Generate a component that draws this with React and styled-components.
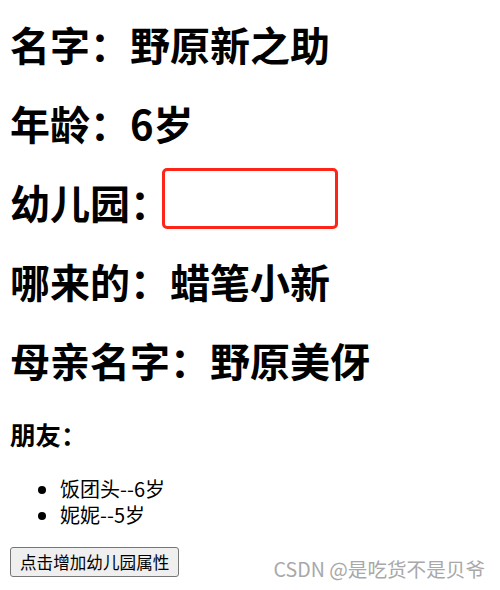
import React from "react";
import styled, { createGlobalStyle } from "styled-components";

const GlobalStyle = createGlobalStyle`
  html, body {
    margin: 0;
    padding: 0;
    background: #fff;
  }
  body {
    font-family: "Noto Sans CJK SC", "Liberation Sans", sans-serif;
    color: #000;
  }
`;

const Page = styled.div`
  position: relative;
  width: 500px;
  height: 590px;
  padding: 1px 10px 0;
  box-sizing: border-box;
  overflow: hidden;
`;

const Title = styled.h1`
  font-size: 40px;
  font-weight: 700;
  line-height: 52px;
  height: 52px;
  margin: 0 0 27px;
  display: flex;
  align-items: center;

  &:first-child {
    margin-top: 16.5px;
  }
`;

const Field = styled.span`
  display: inline-block;
  flex: none;
  width: 170px;
  height: 55px;
  border: 3px solid #ff2418;
  border-radius: 5px;
  margin: -7.5px 0 -1.5px -8px;
`;

const SubTitle = styled.h3`
  font-size: 25.5px;
  font-weight: 700;
  line-height: 30px;
  margin: 33px 0 27.5px;
`;

const List = styled.ul`
  margin: 0 0 19px;
  padding-left: 50px;
  font-size: 20px;
  line-height: 26px;
`;

const Item = styled.li``;

const Button = styled.button`
  display: block;
  font-family: "Noto Sans CJK SC", sans-serif;
  font-size: 16.6px;
  line-height: 22px;
  padding: 3px 9px;
  background: #efefef;
  border: 1px solid #767676;
  border-radius: 3px;
  color: #000;
`;

const Watermark = styled.div`
  position: absolute;
  right: 15px;
  bottom: 7px;
  font-size: 19.6px;
  color: #a8a8a8;
  text-shadow: 0 0 1px #fff;
`;

const friends = [
  { name: "饭团头", age: 6 },
  { name: "妮妮", age: 5 },
];

export default function App() {
  return (
    <>
      <GlobalStyle />
      <Page>
        <Title>名字：野原新之助</Title>
        <Title>年龄：6岁</Title>
        <Title>
          幼儿园：<Field />
        </Title>
        <Title>哪来的：蜡笔小新</Title>
        <Title>母亲名字：野原美伢</Title>
        <SubTitle>朋友：</SubTitle>
        <List>
          {friends.map((f) => (
            <Item key={f.name}>
              {f.name}--{f.age}岁
            </Item>
          ))}
        </List>
        <Button>点击增加幼儿园属性</Button>
        <Watermark>CSDN @是吃货不是贝爷</Watermark>
      </Page>
    </>
  );
}
